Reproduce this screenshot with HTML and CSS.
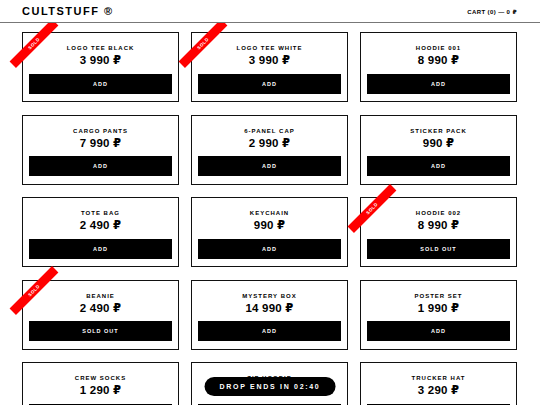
FILE: index.html
```html
<!doctype html>
<html lang="ru">
<head>
  <meta charset="utf-8" />
  <meta name="viewport" content="width=device-width, initial-scale=1" />
  <title>CULTSTUFF</title>
  <link rel="stylesheet" href="styles.css">
</head>

<body>
  <header class="top">
    <div class="logo">CULTSTUFF ®</div>
    <div class="cart">CART (0) — 0 ₽</div>
  </header>

  <main class="grid">
    <article class="card">
      <div class="ribbon">SOLD</div>
      <p class="name">LOGO TEE BLACK</p>
      <p class="price">3 990 ₽</p>
      <button class="buy" type="button">ADD</button>
    </article>
    <article class="card">
      <div class="ribbon">SOLD</div>
      <p class="name">LOGO TEE WHITE</p>
      <p class="price">3 990 ₽</p>
      <button class="buy" type="button">ADD</button>
    </article>
    <article class="card">
      <p class="name">HOODIE 001</p>
      <p class="price">8 990 ₽</p>
      <button class="buy" type="button">ADD</button>
    </article>

    <article class="card">
      <p class="name">CARGO PANTS</p>
      <p class="price">7 990 ₽</p>
      <button class="buy" type="button">ADD</button>
    </article>
    <article class="card">
      <p class="name">6-PANEL CAP</p>
      <p class="price">2 990 ₽</p>
      <button class="buy" type="button">ADD</button>
    </article>
    <article class="card">
      <p class="name">STICKER PACK</p>
      <p class="price">990 ₽</p>
      <button class="buy" type="button">ADD</button>
    </article>

    <article class="card">
      <p class="name">TOTE BAG</p>
      <p class="price">2 490 ₽</p>
      <button class="buy" type="button">ADD</button>
    </article>
    <article class="card">
      <p class="name">KEYCHAIN</p>
      <p class="price">990 ₽</p>
      <button class="buy" type="button">ADD</button>
    </article>
    <article class="card">
      <div class="ribbon">SOLD</div>
      <p class="name">HOODIE 002</p>
      <p class="price">8 990 ₽</p>
      <button class="buy" type="button" disabled>SOLD OUT</button>
    </article>

    <article class="card">
      <div class="ribbon">SOLD</div>
      <p class="name">BEANIE</p>
      <p class="price">2 490 ₽</p>
      <button class="buy" type="button" disabled>SOLD OUT</button>
    </article>
    <article class="card">
      <p class="name">MYSTERY BOX</p>
      <p class="price">14 990 ₽</p>
      <button class="buy" type="button">ADD</button>
    </article>
    <article class="card">
      <p class="name">POSTER SET</p>
      <p class="price">1 990 ₽</p>
      <button class="buy" type="button">ADD</button>
    </article>

    <article class="card">
      <p class="name">CREW SOCKS</p>
      <p class="price">1 290 ₽</p>
      <button class="buy" type="button">ADD</button>
    </article>
    <article class="card">
      <p class="name">ZIP HOODIE</p>
      <p class="price">9 990 ₽</p>
      <button class="buy" type="button">ADD</button>
    </article>
    <article class="card">
      <p class="name">TRUCKER HAT</p>
      <p class="price">3 290 ₽</p>
      <button class="buy" type="button">ADD</button>
    </article>
  </main>

  <div class="drop">DROP ENDS IN 02:40</div>
</body>
</html>
```

FILE: styles.css
```css
*{ box-sizing:border-box; }

body{
  margin:0;
  font-family: "Liberation Sans", Arial, "DejaVu Sans", sans-serif;
  background:#fff;
  color:#000;
}

.top{
  position:sticky;
  top:0;
  z-index:10;
  height:23px;
  padding:0 23px 0 22px;
  display:flex;
  justify-content:space-between;
  align-items:center;
  background:#fff;
  border-bottom:1px solid #777;
}
.logo{
  font-size:11px;
  font-weight:700;
  letter-spacing:1.5px;
}
.cart{
  font-size:6px;
  font-weight:700;
  letter-spacing:.4px;
}

.grid{
  display:grid;
  grid-template-columns: repeat(3, minmax(0, 1fr));
  gap:12.5px 12px;
  padding:9px 23px 60px 22px;
}

.card{
  position:relative;
  height:70px;
  border:1px solid #111;
  padding:11px 6px 7px;
  text-align:center;
}

/* corner band, sits half outside the card */
.ribbon{
  position:absolute;
  top:5.5px;
  left:-19px;
  width:60px;
  height:9px;
  line-height:9px;
  background:#f00;
  color:#fff;
  font-size:4.5px;
  font-weight:700;
  letter-spacing:.5px;
  transform:rotate(-45deg);
  z-index:2;
}

.name{
  margin:0;
  font-size:6px;
  line-height:8px;
  font-weight:700;
  letter-spacing:1px;
}
.price{
  margin:2px 0 0 0;
  font-size:11.5px;
  line-height:13px;
  font-weight:700;
  letter-spacing:.2px;
}
.buy{
  display:block;
  width:100%;
  height:20px;
  margin-top:6.5px;
  border:none;
  background:#000;
  color:#fff;
  font-family:inherit;
  font-size:5.5px;
  font-weight:700;
  letter-spacing:1px;
  padding:0;
  cursor:pointer;
}
.buy:disabled{ cursor:default; }

.drop{
  position:fixed;
  left:50%;
  bottom:9px;
  transform:translateX(-50%);
  z-index:20;
  height:19px;
  line-height:19px;
  padding:0 15px;
  border-radius:999px;
  background:#000;
  color:#fff;
  font-size:7px;
  font-weight:700;
  letter-spacing:1.7px;
  white-space:nowrap;
}
```
